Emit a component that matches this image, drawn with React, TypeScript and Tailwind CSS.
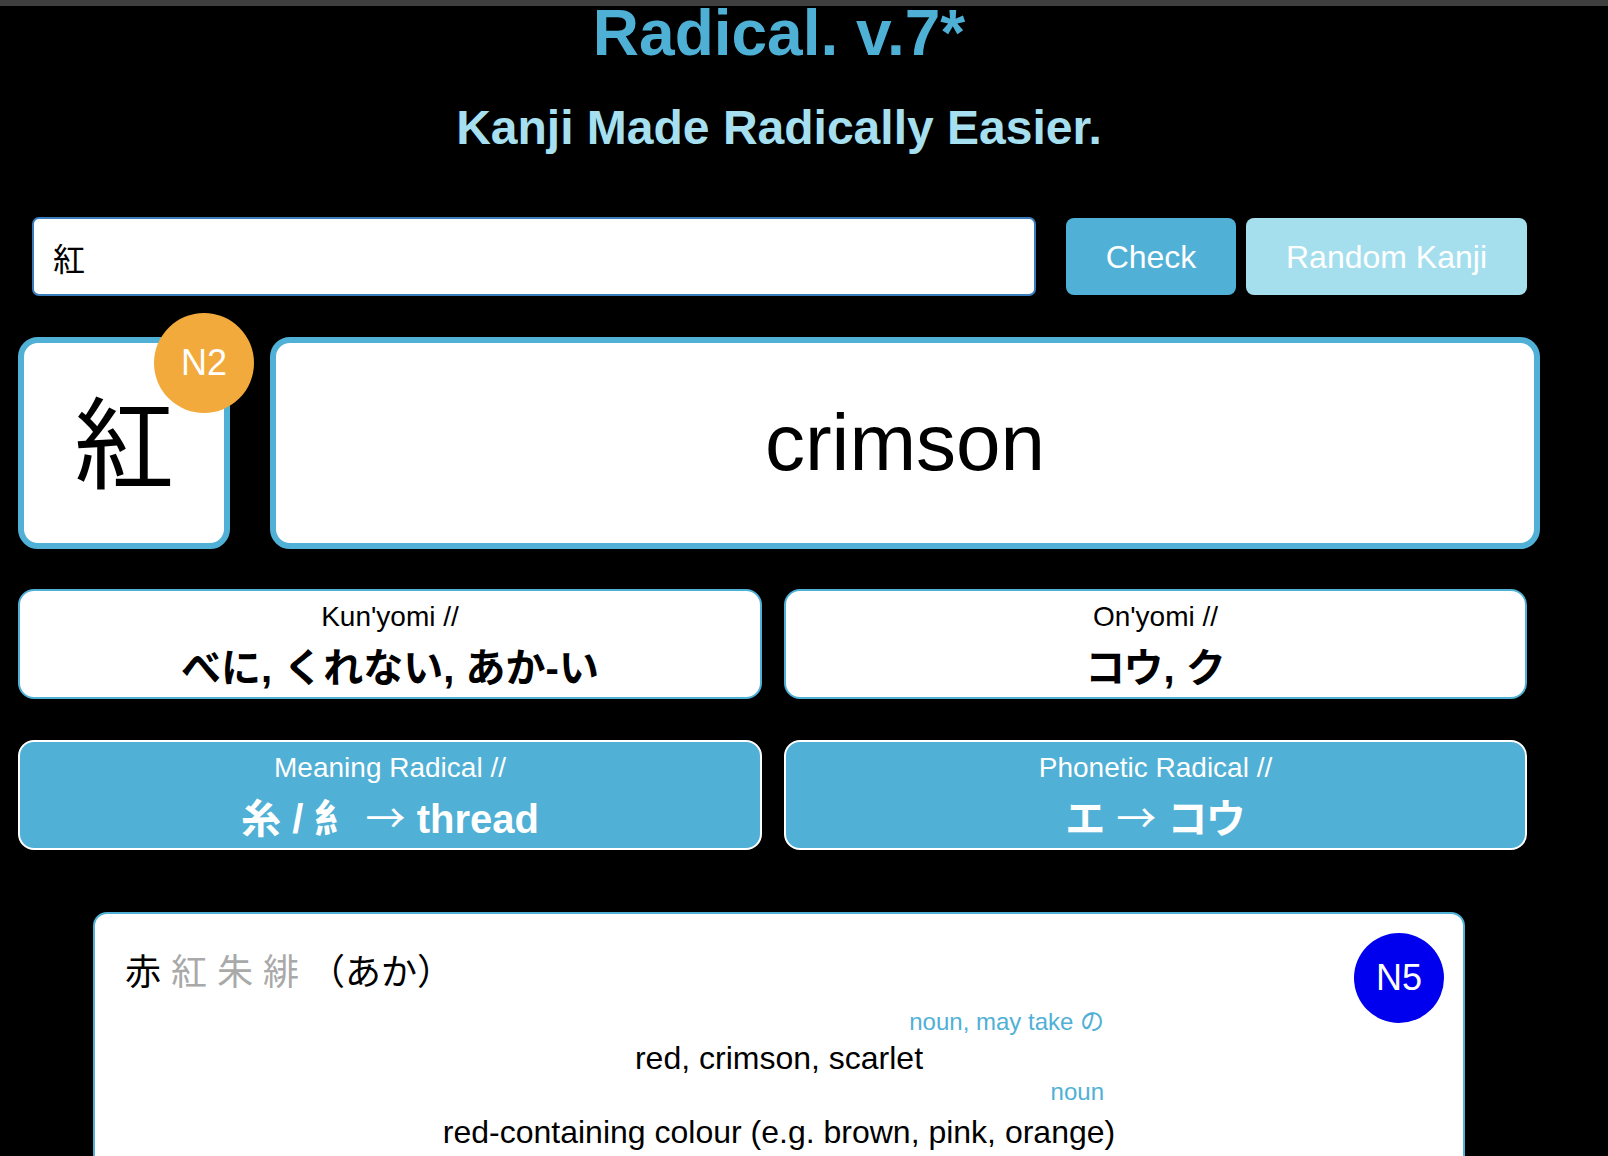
import React from 'react';

type Box = { label: string; value: React.ReactNode };

const ReadingBox: React.FC<Box & { filled?: boolean; width: string }> = ({ label, value, filled, width }) => (
  <div
    className={`h-[110px] ${width} rounded-2xl border-2 pt-[12px] text-center ${
      filled ? 'border-white bg-[#50b0d5] text-white' : 'border-[#50b0d5] bg-white text-black'
    }`}
  >
    <div className="text-[28px] leading-[28px]">{label}</div>
    <div className="mt-[13px] text-[40px] font-bold leading-[48px]">{value}</div>
  </div>
);

// the arrow comes from the CJK font so it is full width and thin
const Arrow = () => <span className="font-['Noto_Sans_CJK_JP',sans-serif] font-normal leading-none">→</span>;

const App: React.FC = () => {
  return (
    <div className="h-screen overflow-hidden bg-black font-['Liberation_Sans','Noto_Sans_CJK_JP',sans-serif]">
      <div className="h-[6px] bg-[#3f3f3f]" />

      <div className="w-[1558px]">
        <h1 className="text-center text-[64px] font-bold leading-[54px] text-[#4fb0d6]">Radical. v.7*</h1>
        <h2 className="mt-[40px] text-center text-[48px] font-bold leading-[56px] text-[#a6e0f0]">
          Kanji Made Radically Easier.
        </h2>

        {/* search */}
        <div className="ml-[32px] mt-[61px] flex items-center">
          <input
            defaultValue="紅"
            className="h-[79px] w-[1004px] rounded-[7px] border-2 border-[#3a7dbd] bg-white pl-[19px] text-[32px] text-black outline-none"
          />
          <button className="ml-[30px] h-[77px] w-[170px] rounded-[8px] bg-[#50b0d5] text-[32px] text-white">
            Check
          </button>
          <button className="ml-[10px] h-[77px] w-[281px] rounded-[8px] bg-[#a5dfee] text-[32px] text-white">
            Random Kanji
          </button>
        </div>

        {/* kanji + meaning */}
        <div className="ml-[18px] mt-[41px] flex">
          <div className="relative flex h-[212px] w-[212px] items-center justify-center rounded-[20px] border-[6px] border-[#50b0d5] bg-white">
            <span className="mt-[6px] text-[100px] leading-none text-black">紅</span>
            <div className="absolute -right-[30px] -top-[30px] flex h-[100px] w-[100px] items-center justify-center rounded-full bg-[#f2aa3c] text-[36px] text-white">
              N2
            </div>
          </div>
          <div className="ml-[40px] flex h-[212px] w-[1270px] items-center justify-center rounded-[20px] border-[6px] border-[#50b0d5] bg-white text-[80px] leading-none text-black">
            crimson
          </div>
        </div>

        {/* readings */}
        <div className="ml-[18px] mt-[40px] flex gap-[22px]">
          <ReadingBox width="w-[744px]" label="Kun'yomi //" value="べに, くれない, あか-い" />
          <ReadingBox width="w-[743px]" label="On'yomi //" value="コウ, ク" />
        </div>

        {/* radicals */}
        <div className="ml-[18px] mt-[41px] flex gap-[22px]">
          <ReadingBox
            filled
            width="w-[744px]"
            label="Meaning Radical //"
            value={
              <>
                糸 / 糹 <Arrow /> thread
              </>
            }
          />
          <ReadingBox
            filled
            width="w-[743px]"
            label="Phonetic Radical //"
            value={
              <>
                エ <Arrow /> コウ
              </>
            }
          />
        </div>

        {/* dictionary entry */}
        <div className="relative ml-[93px] mt-[62px] h-[400px] w-[1372px] rounded-[14px] border-2 border-[#50b0d5] bg-white px-[30px] pt-[37px]">
          <div className="text-[36px] leading-[44px] text-black">
            赤 <span className="text-[#a9a9a9]">紅 朱 緋</span> （あか）
          </div>
          <div className="absolute right-[19px] top-[19px] flex h-[90px] w-[90px] items-center justify-center rounded-full bg-[#0000ee] text-[36px] text-white">
            N5
          </div>

          <div className="mx-auto mt-[13px] w-[650px] text-right text-[24px] leading-[28px] text-[#50b0d5]">
            noun, may take の
          </div>
          <div className="mt-[4px] text-center text-[32px] leading-[36px] text-black">red, crimson, scarlet</div>
          <div className="mx-auto mt-[2px] w-[650px] text-right text-[24px] leading-[28px] text-[#50b0d5]">noun</div>
          <div className="mt-[8px] text-center text-[32px] leading-[36px] text-black">
            red-containing colour (e.g. brown, pink, orange)
          </div>
        </div>
      </div>
    </div>
  );
};

export default App;
